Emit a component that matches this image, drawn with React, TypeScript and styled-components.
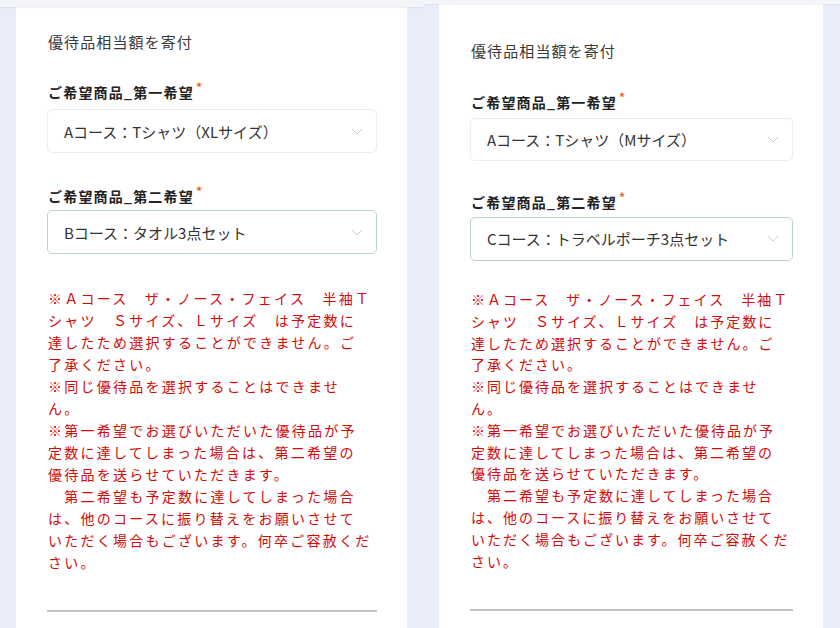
import styled, { createGlobalStyle } from "styled-components";

const GlobalStyle = createGlobalStyle`
  html, body {
    margin: 0;
    padding: 0;
  }
  body {
    width: 840px;
    height: 628px;
    overflow: hidden;
    background: #e9edfa;
    font-family: "Noto Sans CJK JP", "Noto Sans", sans-serif;
  }
`;

const Page = styled.div`
  display: flex;
  width: 840px;
  height: 628px;
  overflow: hidden;
`;

const Shot = styled.div<{ $w: number }>`
  width: ${(p) => p.$w}px;
  flex-shrink: 0;
  display: flex;
  flex-direction: column;
  background: #e9edfa;
`;

const TopBar = styled.div<{ $h: number }>`
  height: ${(p) => p.$h}px;
  flex-shrink: 0;
  background: #f4f5f9;
  box-shadow: 0 1px 1px rgba(120, 130, 160, 0.12);
  position: relative;
  z-index: 1;
`;

const Card = styled.div<{ $ml: number; $mr: number; $pt: number }>`
  flex: 1;
  margin: 0 ${(p) => p.$mr}px 0 ${(p) => p.$ml}px;
  padding: ${(p) => p.$pt}px 30px 0 31px;
  background: #fff;
  display: flex;
  flex-direction: column;
`;

const Title = styled.div`
  font-size: 15px;
  line-height: 22px;
  letter-spacing: 1.1px;
  color: #3a3a3a;
  padding-left: 1px;
`;

const Label = styled.div<{ $mt: number }>`
  margin-top: ${(p) => p.$mt}px;
  font-size: 14px;
  line-height: 20px;
  height: 20px;
  font-weight: 700;
  letter-spacing: 1.2px;
  color: #222;
  padding-left: 1px;
`;

const Required = styled.span`
  color: #e2663c;
  font-size: 12px;
  line-height: 0;
  font-weight: 700;
  vertical-align: 6px;
  margin-left: 2px;
`;

const Select = styled.div<{ $focused?: boolean; $h: number; $mt: number }>`
  margin-top: ${(p) => p.$mt}px;
  height: ${(p) => p.$h}px;
  box-sizing: border-box;
  border: 1px solid ${(p) => (p.$focused ? "#bcd2d9" : "#ececec")};
  border-radius: 5px;
  display: flex;
  align-items: center;
  justify-content: space-between;
  padding: 0 13px 0 16px;
  font-size: 15px;
  color: #333;
  background: #fff;
`;

const Chevron = () => (
  <svg width="12" height="7" viewBox="0 0 12 7" fill="none">
    <path d="M1 1l5 5 5-5" stroke="#c9c9c9" strokeWidth="1" />
  </svg>
);

const Notice = styled.div<{ $mt: number; $ls: number; $lh: number }>`
  margin-top: ${(p) => p.$mt}px;
  font-size: 14px;
  line-height: ${(p) => p.$lh}px;
  letter-spacing: ${(p) => p.$ls}px;
  color: #d20a0a;
  white-space: nowrap;
  padding-left: 1px;
`;

const Divider = styled.hr<{ $mt: number }>`
  margin: ${(p) => p.$mt}px 0 0;
  border: none;
  border-top: 2px solid #c4c4c7;
  height: 0;
`;

const noticeLines = [
  "※Ａコース　ザ・ノース・フェイス　半袖Ｔ",
  "シャツ　Ｓサイズ、Ｌサイズ　は予定数に",
  "達したため選択することができません。ご",
  "了承ください。",
  "※同じ優待品を選択することはできませ",
  "ん。",
  "※第一希望でお選びいただいた優待品が予",
  "定数に達してしまった場合は、第二希望の",
  "優待品を送らせていただきます。",
  "　第二希望も予定数に達してしまった場合",
  "は、他のコースに振り替えをお願いさせて",
  "いただく場合もございます。何卒ご容赦くだ",
  "さい。",
];

type ShotConfig = {
  width: number;
  bar: number;
  ml: number;
  mr: number;
  pt: number;
  label1: number;
  sel1Gap: number;
  sel1H: number;
  label2: number;
  sel2Gap: number;
  sel2H: number;
  noticeTop: number;
  ls: number;
  lh: number;
  divider: number;
  first: string;
  second: string;
};

const shots: ShotConfig[] = [
  {
    width: 424,
    bar: 7,
    ml: 16,
    mr: 17,
    pt: 24,
    label1: 29,
    sel1Gap: 7,
    sel1H: 44,
    label2: 33,
    sel2Gap: 4,
    sel2H: 44,
    noticeTop: 32.5,
    ls: 2.25,
    lh: 22,
    divider: 37,
    first: "Aコース：Tシャツ（XLサイズ）",
    second: "Bコース：タオル3点セット",
  },
  {
    width: 416,
    bar: 4,
    ml: 15,
    mr: 17,
    pt: 36,
    label1: 30,
    sel1Gap: 6,
    sel1H: 43,
    label2: 30.5,
    sel2Gap: 5,
    sel2H: 44,
    noticeTop: 28.5,
    ls: 2,
    lh: 21.8,
    divider: 37,
    first: "Aコース：Tシャツ（Mサイズ）",
    second: "Cコース：トラベルポーチ3点セット",
  },
];

function FormShot({ c }: { c: ShotConfig }) {
  return (
    <Shot $w={c.width}>
      <TopBar $h={c.bar} />
      <Card $ml={c.ml} $mr={c.mr} $pt={c.pt}>
        <Title>優待品相当額を寄付</Title>
        <Label $mt={c.label1}>
          ご希望商品_第一希望<Required>*</Required>
        </Label>
        <Select $h={c.sel1H} $mt={c.sel1Gap}>
          <span>{c.first}</span>
          <Chevron />
        </Select>
        <Label $mt={c.label2}>
          ご希望商品_第二希望<Required>*</Required>
        </Label>
        <Select $h={c.sel2H} $mt={c.sel2Gap} $focused>
          <span>{c.second}</span>
          <Chevron />
        </Select>
        <Notice $mt={c.noticeTop} $ls={c.ls} $lh={c.lh}>
          {noticeLines.map((line, i) => (
            <div key={i}>{line}</div>
          ))}
        </Notice>
        <Divider $mt={c.divider} />
      </Card>
    </Shot>
  );
}

export default function App() {
  return (
    <>
      <GlobalStyle />
      <Page>
        {shots.map((c, i) => (
          <FormShot key={i} c={c} />
        ))}
      </Page>
    </>
  );
}
